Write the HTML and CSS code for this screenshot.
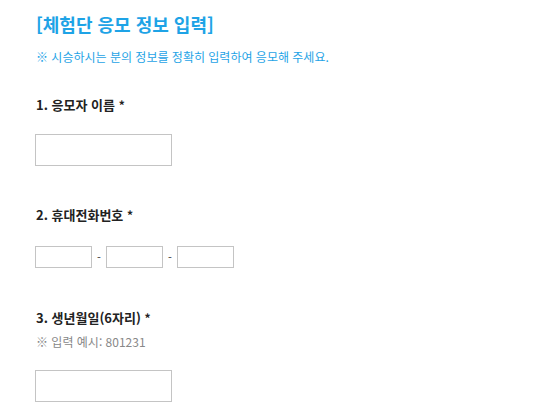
FILE: index.html
```html
<!DOCTYPE html>
<html lang="ko">
<head>
<meta charset="utf-8">
<link rel="stylesheet" href="styles.css">
</head>
<body>
<div class="wrap">
  <h2 class="title">[체험단 응모 정보 입력]</h2>
  <p class="notice">※ 시승하시는 분의 정보를 정확히 입력하여 응모해 주세요.</p>

  <div class="field f1">
    <div class="label">1. 응모자 이름 <span class="req">*</span></div>
    <input class="input-lg" type="text">
  </div>

  <div class="field f2">
    <div class="label">2. 휴대전화번호 <span class="req">*</span></div>
    <div class="phone">
      <input class="input-sm" type="text"><span class="dash">-</span><input class="input-sm" type="text"><span class="dash">-</span><input class="input-sm" type="text">
    </div>
  </div>

  <div class="field f3">
    <div class="label">3. 생년월일(6자리) <span class="req">*</span></div>
    <div class="example">※ 입력 예시: 801231</div>
    <input class="input-lg ex-input" type="text">
  </div>
</div>
</body>
</html>
```

FILE: styles.css
```css
html, body {
  margin: 0;
  padding: 0;
  background: #fff;
}
body {
  font-family: "Noto Sans CJK KR", "Noto Sans", sans-serif;
  color: #222;
}
.wrap {
  padding: 12px 35px 0 36px;
}
.title {
  margin: 0;
  font-size: 18px;
  line-height: 24px;
  font-weight: 700;
  color: #1ea3e6;
}
.notice {
  margin: 13px 0 0;
  font-size: 12px;
  line-height: 16px;
  color: #1ea3e6;
}
.field {
  display: flex;
  flex-direction: column;
  align-items: flex-start;
}
.f1 { margin-top: 30px; }
.f2 { margin-top: 39px; }
.f3 { margin-top: 40px; }
.label {
  font-size: 13px;
  line-height: 20px;
  font-weight: 700;
  color: #222;
}
.req {
  font-size: 12px;
}
input {
  box-sizing: border-box;
  margin: 0;
  border: 1px solid #c4c4c4;
  background: #fff;
  outline: none;
  padding: 0;
}
.input-lg {
  width: 137px;
  height: 32px;
  margin-top: 19px;
  margin-left: -1px;
}
.phone {
  display: flex;
  align-items: center;
  margin-top: 21px;
  margin-left: -1px;
}
.input-sm {
  width: 57px;
  height: 22px;
}
.dash {
  width: 14px;
  text-align: center;
  font-size: 11px;
  line-height: 22px;
  color: #333;
}
.example {
  margin-top: 6px;
  font-size: 12px;
  line-height: 16px;
  color: #888;
}
.ex-input {
  margin-top: 20px;
}
```
